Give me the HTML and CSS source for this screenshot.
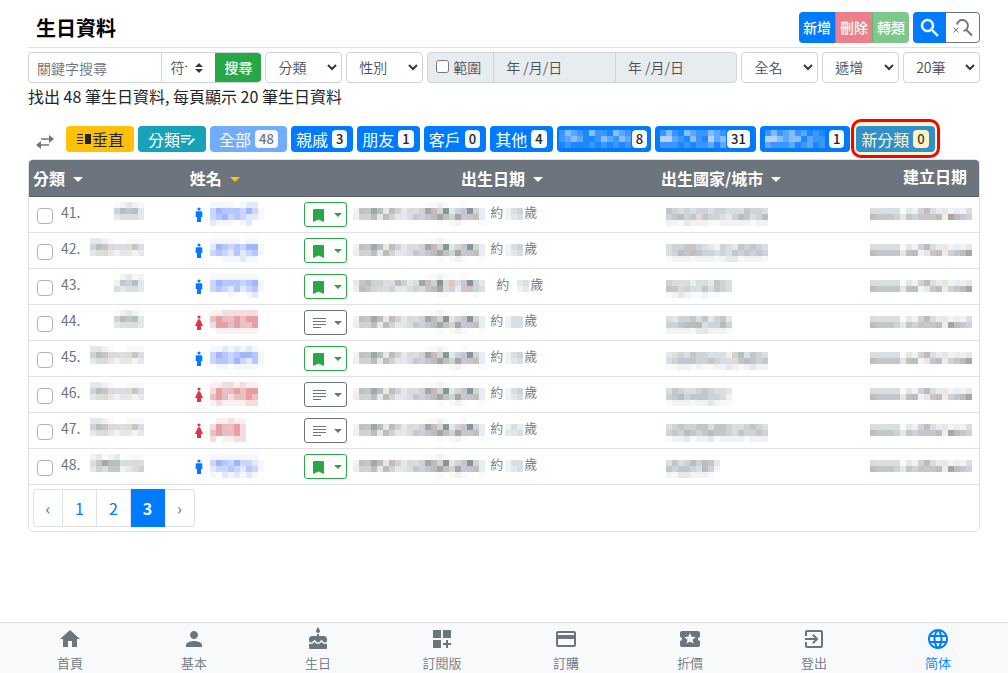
FILE: index.html
```html
<!DOCTYPE html>
<html lang="zh-Hant">
<head>
<meta charset="utf-8">
<meta name="viewport" content="width=device-width, initial-scale=1">
<title>生日資料</title>
<link rel="stylesheet" href="styles.css">
</head>
<body>
<main class="page">
  <header class="topbar">
    <h1 class="title">生日資料</h1>
    <div class="group">
      <button class="btn btn-blue">新增</button>
      <button class="btn btn-red">刪除</button>
      <button class="btn btn-green">轉類</button>
    </div>
    <div class="group tools">
      <button class="btn btn-blue btn-icon" aria-label="搜尋"><svg class="ic24" viewBox="0 0 24 24"><path stroke="currentColor" stroke-width=".4" d="M15.5 14h-.79l-.28-.27C15.41 12.59 16 11.11 16 9.5 16 5.91 13.09 3 9.5 3S3 5.91 3 9.5 5.91 16 9.5 16c1.61 0 3.09-.59 4.23-1.57l.27.28v.79l5 4.99L20.49 19l-4.99-5zm-6 0C7.01 14 5 11.99 5 9.5S7.01 5 9.5 5 14 7.01 14 9.5 11.99 14 9.5 14z"/></svg></button>
      <button class="btn btn-line btn-icon" aria-label="清除搜尋"><svg class="ic24" viewBox="0 0 24 24"><path fill="none" stroke="currentColor" stroke-width="2" d="M6 8.500a5.500 5.500 0 1 1 6.500 6.400M14.500 13l6.500 6.500"/><path fill="none" stroke="currentColor" d="M2.500 11.500l5 5M7.500 11.500l-5 5"/></svg></button>
    </div>
  </header>

  <form class="filters">
    <div class="field search">
      <input class="keyword" type="text" placeholder="關鍵字搜尋" aria-label="關鍵字搜尋">
      <span class="match"><select aria-label="符合方式"><option>符合</option></select><svg viewBox="0 0 8 10"><path d="M0 4l4-4 4 4zM0 6l4 4 4-4z"/></svg></span>
      <button class="btn submit" type="button">搜尋</button>
    </div>
    <div class="field pick"><select aria-label="分類"><option>分類</option></select><svg viewBox="0 0 10 7"><path d="M1 1l4 4 4-4"/></svg></div>
    <div class="field pick"><select aria-label="性別"><option>性別</option></select><svg viewBox="0 0 10 7"><path d="M1 1l4 4 4-4"/></svg></div>
    <div class="field range">
      <label class="range-label"><input type="checkbox">範圍</label>
      <input class="date" type="text" value="年 /月/日" disabled aria-label="開始日期">
      <input class="date" type="text" value="年 /月/日" disabled aria-label="結束日期">
    </div>
    <div class="field pick"><select aria-label="顯示名稱"><option>全名</option></select><svg viewBox="0 0 10 7"><path d="M1 1l4 4 4-4"/></svg></div>
    <div class="field pick"><select aria-label="排序"><option>遞增</option></select><svg viewBox="0 0 10 7"><path d="M1 1l4 4 4-4"/></svg></div>
    <div class="field pick"><select aria-label="每頁筆數"><option>20筆</option></select><svg viewBox="0 0 10 7"><path d="M1 1l4 4 4-4"/></svg></div>
  </form>
  <p class="summary">找出 48 筆生日資料, 每頁顯示 20 筆生日資料</p>

  <div class="tags">
    <svg class="swap" viewBox="0 0 18 14"><path fill="none" stroke="currentColor" stroke-width="1.500" d="M5 4h11M2 10h11"/><path d="M13 0l5 4-5 4zM5 6l-5 4 5 4z"/></svg>
    <button class="tag tag-wide tag-yellow"><svg class="ic16" viewBox="0 0 16 16"><path d="M1 3h6v1H1zM1 6h6v1H1zM1 9h6v1H1zM1 12h6v1H1zM9 3h6v10H9z"/></svg>垂直</button>
    <button class="tag tag-wide tag-teal">分類<svg class="ic16" viewBox="0 0 16 16"><path d="M1 4h10v1.500H1zM1 7h9v1.500H1zM1 10h5v1.500H1zM8 12.500l5.500-5.500 1.500 1.500-5.500 5.500H8z"/></svg></button>
    <button class="tag tag-all">全部<span class="badge">48</span></button>
    <button class="tag">親戚<span class="badge">3</span></button>
    <button class="tag">朋友<span class="badge">1</span></button>
    <button class="tag">客戶<span class="badge">0</span></button>
    <button class="tag">其他<span class="badge">4</span></button>
    <button class="tag tag-tight" aria-label="分類 8"><span data-mosaic="BDCBADBBADCB/BCDCAABDCBDC/ABAAABABABAB"></span><span class="badge">8</span></button>
    <button class="tag tag-masked" aria-label="分類 31"><span data-mosaic="BDBADCBBDCB/EECBADBAECD/BBBABABBCAC"></span><span class="badge">31</span></button>
    <button class="tag" aria-label="分類 1"><span data-mosaic="BDBCDBCABA/EEDCDDACBB/CBBBCABCAB"></span><span class="badge">1</span></button>
    <button class="tag tag-new">新分類<span class="badge">0</span></button>
  </div>

  <section class="card">
    <table class="list">
      <colgroup><col class="c-cat"><col class="c-name"><col class="c-mark"><col class="c-birth"><col class="c-city"><col class="c-made"></colgroup>
      <thead>
        <tr><th>分類<i class="caret"></i></th><th>姓名<i class="caret active"></i></th><th></th><th class="center">出生日期<i class="caret"></i></th><th>出生國家/城市<i class="caret"></i></th><th class="made">建立日期</th></tr>
      </thead>
      <tbody id="rows"></tbody>
    </table>
    <nav class="pager" aria-label="分頁">
      <a href="#" aria-label="上一頁" class="prev">‹</a><a href="#">1</a><a href="#">2</a><a href="#" class="current">3</a><a href="#" aria-label="下一頁" class="next">›</a>
    </nav>
  </section>
</main>

<nav class="bottom">
  <a href="#"><svg class="ic24" viewBox="0 0 24 24"><path d="M10 20v-6h4v6h5v-8h3L12 3 2 12h3v8z"/></svg>首頁</a>
  <a href="#"><svg class="ic24" viewBox="0 0 24 24"><path d="M12 12c2.210 0 4-1.790 4-4s-1.790-4-4-4-4 1.790-4 4 1.790 4 4 4zm0 2c-2.670 0-8 1.340-8 4v2h16v-2c0-2.660-5.330-4-8-4z"/></svg>基本</a>
  <a href="#"><svg class="ic24" viewBox="0 0 24 24"><path d="M12 6c1.110 0 2-.9 2-2 0-.38-.1-.73-.29-1.030L12 0l-1.710 2.970c-.19.3-.29.65-.29 1.030 0 1.100.9 2 2 2zm4.600 9.990l-1.070-1.070-1.080 1.070c-1.300 1.300-3.580 1.310-4.890 0l-1.070-1.070-1.090 1.070C6.750 16.640 5.880 17 4.960 17c-.73 0-1.400-.23-1.960-.61V21c0 .55.45 1 1 1h16c.55 0 1-.45 1-1v-4.610c-.56.38-1.230.61-1.960.61-.92 0-1.790-.36-2.440-1.010zM18 9h-5V7h-2v2H6c-1.660 0-3 1.340-3 3v1.540c0 1.080.88 1.960 1.960 1.960.52 0 1.020-.2 1.380-.57l2.140-2.130 2.130 2.130c.74.74 2.030.74 2.770 0l2.140-2.130 2.130 2.130c.37.37.86.57 1.380.57 1.080 0 1.960-.88 1.960-1.960V12C21 10.340 19.660 9 18 9z"/></svg>生日</a>
  <a href="#"><svg class="ic24" viewBox="0 0 24 24"><path d="M3 3h8v8H3zM13 3h8v8h-8zM3 13h8v8H3zM18 13h-2v3h-3v2h3v3h2v-3h3v-2h-3z"/></svg>訂閱版</a>
  <a href="#"><svg class="ic24" viewBox="0 0 24 24"><path d="M20 4H4c-1.110 0-1.990.89-1.990 2L2 18c0 1.110.89 2 2 2h16c1.110 0 2-.89 2-2V6c0-1.110-.89-2-2-2zm0 14H4v-6h16v6zm0-10H4V6h16v2z"/></svg>訂購</a>
  <a href="#"><svg class="ic24" viewBox="0 0 24 24"><path d="M20 12c0-1.100.9-2 2-2V6c0-1.100-.9-2-2-2H4c-1.100 0-1.990.9-1.990 2v4c1.100 0 1.990.9 1.990 2s-.89 2-2 2v4c0 1.100.9 2 2 2h16c1.100 0 2-.9 2-2v-4c-1.100 0-2-.9-2-2zm-4.420 4.800L12 14.500l-3.580 2.300 1.080-4.120-3.290-2.690 4.240-.25L12 5.800l1.540 3.950 4.240.25-3.290 2.690 1.090 4.110z"/></svg>折價</a>
  <a href="#"><svg class="ic24" viewBox="0 0 24 24"><path d="M10.090 15.590L11.500 17l5-5-5-5-1.410 1.410L12.670 11H3v2h9.670l-2.580 2.590zM19 3H5c-1.110 0-2 .9-2 2v4h2V5h14v14H5v-4H3v4c0 1.100.89 2 2 2h14c1.100 0 2-.9 2-2V5c0-1.100-.9-2-2-2z"/></svg>登出</a>
  <a href="#" class="lang"><svg class="ic24" viewBox="0 0 24 24"><path d="M11.990 2C6.470 2 2 6.480 2 12s4.470 10 9.990 10C17.520 22 22 17.520 22 12S17.520 2 11.990 2zm6.930 6h-2.950c-.32-1.250-.78-2.450-1.380-3.560 1.840.63 3.370 1.910 4.330 3.560zM12 4.040c.83 1.200 1.480 2.530 1.910 3.960h-3.820c.43-1.430 1.080-2.760 1.910-3.960zM4.260 14C4.100 13.360 4 12.690 4 12s.1-1.360.26-2h3.380c-.08.66-.14 1.320-.14 2s.06 1.340.14 2H4.260zm.82 2h2.950c.32 1.250.78 2.450 1.380 3.560-1.840-.63-3.370-1.900-4.330-3.560zm2.950-8H5.080c.96-1.660 2.490-2.930 4.330-3.560C8.810 5.550 8.350 6.750 8.030 8zM12 19.960c-.83-1.200-1.480-2.530-1.910-3.960h3.820c-.43 1.430-1.080 2.760-1.910 3.960zM14.340 14H9.660c-.09-.66-.16-1.320-.16-2s.07-1.350.16-2h4.680c.09.65.16 1.320.16 2s-.07 1.340-.16 2zm.25 5.560c.6-1.110 1.060-2.310 1.380-3.560h2.950c-.96 1.650-2.490 2.930-4.330 3.560zM16.360 14c.08-.66.14-1.320.14-2s-.06-1.340-.14-2h3.380c.16.64.26 1.310.26 2s-.1 1.360-.26 2h-3.380z"/></svg>简体</a>
</nav>
<script src="rows.js"></script>
</body>
</html>
```

FILE: styles.css
```css
* { box-sizing: border-box; }
body {
  margin: 0;
  min-height: 100vh;
  display: flex;
  flex-direction: column;
  background: #fff;
  color: #212529;
  font: 16px/24px "Noto Sans CJK TC", "Noto Sans", sans-serif;
}
button, input, select { font: inherit; color: inherit; margin: 0; }
a { text-decoration: none; }
svg { display: block; flex: none; fill: currentColor; }
.ic24 { width: 24px; height: 24px; }
.ic16 { width: 16px; height: 16px; }

.page { padding: 9px 28px 16px; }

.topbar {
  display: flex;
  align-items: center;
  gap: 4px;
  height: 39px;
  padding: 0 0 1px 8px;
  border-bottom: 1px solid #dee2e6;
}
.title { margin: 0 auto 0 0; font-size: 20px; line-height: 30px; font-weight: 700; color: #000; }
.group { display: flex; border-radius: 4px; overflow: hidden; }
.btn {
  display: flex;
  align-items: center;
  justify-content: center;
  height: 31px;
  border: 0;
  padding: 0 4px 1px;
  font-size: 14px;
  line-height: 20px;
  font-weight: 500;
  color: #fff;
}
.btn-blue { background: #007bff; }
.btn-red { background: #eb7f8a; border-left: 1px solid #e4606d; }
.btn-green { background: #7dc88c; border-left: 1px solid #5fb571; }
.btn-icon { width: 33px; padding: 0; }
.btn-line { width: 34px; background: #fff; color: #6c757d; border: 1px solid #6c757d; border-left: 0; border-radius: 0 4px 4px 0; }

.filters { display: flex; gap: 4px; margin-top: 4px; }
.field {
  display: flex;
  position: relative;
  height: 31px;
  border: 1px solid #ced4da;
  border-radius: 4px;
  overflow: hidden;
  font-size: 14px;
  font-weight: 350;
  color: #495057;
  background: #fff;
}
.field select { appearance: none; width: 100%; border: 0; background: none; padding: 0 0 2px 12px; }
.field svg { position: absolute; pointer-events: none; color: #343a40; }
.search { flex: 236 1 0; border-right: 0; }
.keyword { flex: 1; min-width: 0; border: 0; padding: 0 8px; }
.keyword::placeholder { color: #6c757d; }
.match { display: flex; position: relative; width: 54px; border-left: 1px solid #ced4da; }
.match select { padding: 0 28px 2px 8px; overflow: hidden; text-overflow: clip; }
.match svg { width: 8px; height: 10px; right: 12px; top: 10px; }
.submit { width: 46px; margin: -1px 0; background: #28a745; }
.pick { flex: 76 1 0; }
.pick svg { width: 10px; height: 7px; right: 4px; top: 11px; fill: none; stroke: currentColor; stroke-width: 2; }
.range { flex: 313 1 0; background: #e9ecef; }
.range-label { display: flex; align-items: center; gap: 4px; width: 65px; padding: 0 0 2px 8px; }
.range-label input { width: 13px; height: 13px; }
.date { flex: 1; min-width: 0; border: 0; border-left: 1px solid #ced4da; background: none; padding: 0 12px 2px; color: #495057; }

.summary { margin: 1px 0 0; }

.tags { display: flex; align-items: center; gap: 4px; margin-top: 18px; padding-left: 8px; isolation: isolate; }
.swap { width: 18px; height: 14px; margin: 6px 8px 0 0; color: #6c757d; }
.tag {
  display: flex;
  align-items: center;
  gap: 4px;
  height: 26px;
  padding: 0 6px 0 5px;
  border: 0;
  border-radius: 4px;
  background: #007bff;
  color: #fff;
  white-space: nowrap;
}
.tag-wide { gap: 0; padding: 0 10px; }
.tag-yellow { background: #ffc107; color: #212529; }
.tag-teal { background: #17a2b8; }
.tag-all { padding: 0 9px; background: #72acff; }
.tag-all .badge { color: #6c757d; }
.tag-tight { gap: 1px; padding: 0 4px 0 2px; }
.tag-masked { gap: 1px; }
.badge {
  height: 18px;
  padding: 0 4px;
  border-radius: 4px;
  background: #f8f9fa;
  color: #212529;
  font-size: 13px;
  line-height: 18px;
  font-weight: 500;
}
.tag-new { position: relative; margin-left: 2px; background: #318fcb; color: #fbf9cf; }
.tag-new::before {
  content: "";
  position: absolute;
  inset: -7px -5px -6px;
  z-index: -1;
  border: 3px solid #f00;
  border-radius: 10px;
  background: #fcf6cc;
}
.tag-new .badge { background: #fbf5c4; color: #3c3a25; }

.card { margin-top: 7px; border: 1px solid #dee2e6; border-radius: 5px; overflow: hidden; }
.list { width: 100%; table-layout: fixed; border-collapse: collapse; }
.c-cat { width: 16.4%; }
.c-name { width: 12%; }
.c-mark { width: 5.2%; }
.c-birth { width: 32.4%; }
.c-city { width: 21.5%; }
.list th {
  height: 36px;
  padding: 0 5px;
  background: #6c757d;
  color: #fff;
  text-align: left;
  font-weight: 700;
  border-bottom: 1px solid #5c656d;
}
.list th:first-child, .list td:first-child { padding-left: 4px; }
.list .center { text-align: center; }
.list .made { text-align: right; padding-right: 12px; padding-bottom: 4px; }
.caret { display: inline-block; margin-left: 8px; vertical-align: 3px; border: 5px solid transparent; border-top-color: currentColor; border-bottom: 0; }
.active { color: #ffc107; }
.list td { height: 36px; padding: 5px 5px 0; vertical-align: top; border-bottom: 1px solid #dee2e6; font-size: 13px; line-height: 24px; color: #6c757d; font-weight: 350; }
.line { display: flex; height: 24px; align-items: flex-start; }
.line input { appearance: none; width: 16px; height: 16px; margin: 6px 8px 0 4px; border: 1px solid #adb5bd; border-radius: 4px; background: #fff; }
.num { width: 29px; font-size: 14px; line-height: 20px; font-weight: 400; }
.cat { display: flex; justify-content: flex-end; width: 54px; }
.person { width: 8px; height: 16px; margin: 5px 7px 0 5px; }
.male { color: #007bff; }
.female { color: #dc3545; }
.mark { display: flex; align-items: center; gap: 8px; width: 43px; height: 25px; padding: 0 4px 0 7px; border: 1px solid #6c757d; border-radius: 3px; background: #fff; color: #6c757d; }
.mark .ic16 { width: 14px; margin-top: 2px; }
.mark .caret { margin: 1px 0 0; border-width: 4px; border-bottom: 0; }
.saved { color: #28a745; border-color: #28a745; }
.birth { gap: 5px; }
.age { display: flex; gap: 1px; margin-left: -3px; }
.birth span { line-height: 20px; }
.city { padding-left: 5px; }
.created { justify-content: flex-end; padding-right: 2px; }

.pager { display: flex; margin: 4px; }
.pager a { min-width: 34px; height: 38px; border: 1px solid #dee2e6; border-left: 0; color: #007bff; text-align: center; line-height: 36px; }
.pager .prev { min-width: 30px; border-left: 1px solid #dee2e6; border-radius: 4px 0 0 4px; }
.pager .next { min-width: 30px; border-radius: 0 4px 4px 0; color: #6c757d; }
.pager .current { background: #007bff; border-color: #007bff; color: #fff; font-weight: 700; }

.bottom { display: flex; margin-top: auto; height: 51px; padding: 4px 8px 0; background: #f8f9fa; border-top: 1px solid #dee2e6; }
.bottom a { flex: 1; display: flex; flex-direction: column; align-items: center; color: #6c757d; font-size: 13px; line-height: 24px; font-weight: 350; }
.bottom .lang { color: #007bff; }
```

FILE: rows.js
```js
const CELL = 6;
const COLORS = {
  1: '#f8fafa', 2: '#f0f2f3', 3: '#e5e8ea', 4: '#d9dee0', 5: '#cfd3d6', 6: '#c4c7c9', 7: '#b8bdc0', 8: '#a4a7a6', 9: '#859897',
  a: '#f5f7ff', b: '#e2e9ff', c: '#cad6ff', d: '#b6c6ff', e: '#a0b6ff',
  r: '#fbf0f0', s: '#f5dddd', t: '#edbfc0', u: '#e69fa2', v: '#e3bccb',
  w: '#c4bab7', x: '#e0dad5', y: '#f2ede6', z: '#cbc4d5', k: '#e6edf5', p: '#bdc9d4', g: '#c0c1b8',
  A: '#1a88ff', B: '#3b96ff', C: '#5aa8ff', D: '#85beff', E: '#b5d1ff'
};

function mosaic(map) {
  const lines = map.split('/');
  const width = Math.max(...lines.map(l => l.length)) * CELL;
  const height = lines.length * CELL;
  const cells = lines.flatMap((line, y) => [...line].map((c, x) =>
    COLORS[c] ? `<rect x="${x * CELL}" y="${y * CELL}" width="6" height="6" fill="${COLORS[c]}"/>` : ''));
  return `<svg width="${width}" height="${height}" shape-rendering="crispEdges" aria-hidden="true">${cells.join('')}</svg>`;
}

const SHORT = '12321/57673/34443';
const LONG = '332100111/576x44x64/34x323323';
const AGE = '245/234';
const MADE_A = 'x44441325w4k32k23/w66663g7236wy5678';
const MADE_B = 'x44441325w4k32k24/w66653656z6wy8wz5';

const rows = [
  { n: 41, cat: SHORT, male: true, name: 'aaaa0abb0/cedddceca/cdecdcbba/baaa0ab00', city: '65454554554446554/56756x65543576457/22132221122222122', made: MADE_B, age: AGE },
  { n: 42, cat: LONG, male: true, name: 'aaaaa0aa0/bedcdceea/cdcbdbcda/00aaabaa0', city: '45566543254365654/4576w6554546565p5/12221222123312221', made: MADE_A, age: AGE },
  { n: 43, cat: '02312/26573/43443', male: true, name: 'aaaaaaaa0/cedddcdea/cdcbdbcda/000a00ab0', city: '5x4xk443654/66x54464654/12321121100', made: MADE_A, age: '034/023' },
  { n: 44, cat: SHORT, male: false, name: 'rrssssss0/tuvtutuu0/suuvuttu0/0rrrrrrr0', city: '4355p463563/5567w745575/22221332221', made: MADE_B, age: '244/244' },
  { n: 45, cat: LONG, male: true, name: 'aabababa0/cedcdeeda/cddcecbda/0aa0aaaa0', city: '3454655444y574654/456p6556544x67656/11221211223212322', made: MADE_A, age: AGE },
  { n: 46, cat: LONG, male: false, name: 'rrssrsrr0/sutvutuu0/tuvsttut0/rsrrrrss0', city: '46544565443/56756665542/12221223211', made: MADE_A, age: AGE },
  { n: 47, cat: LONG, male: false, name: '0rrsrr000/suttus000/tuvtus000/s0rrss000', city: '45655664665445654/56576567665465565/12231223122221222', made: MADE_B, age: '24k/334' },
  { n: 48, cat: '231230111/4687744x4/354662345', male: true, name: 'aaaaaaaa0/cedceccba/bccdcbdca/a0bababa0', city: '464575763/656654752/213322210', made: MADE_B, age: '244/234' }
];

const DATE = '0000000000001121001000/2g6873w53x458w5935695k/y5573w5334z5678g58z6gk/0000000000000010121001';
const DATE_LONG = '00000000000011210010000/3675544w5348w59xt4z9530/y765x453345x67845kv6540/00000000000000110000100';

const BOOKMARK = '<svg class="ic16" viewBox="0 0 14 16"><path d="M1 15V3q0-1 1-1h9q1 0 1 1v12l-5.500-2.500z"/></svg>';
const NOTES = '<svg class="ic16" viewBox="0 0 14 16" shape-rendering="crispEdges"><path d="M1 3h13v1H1zM1 6h13v1H1zM1 9h13v1H1zM1 12h8v1H1z"/></svg>';
const MALE = '<svg class="person male" viewBox="0 0 8 16"><circle cx="4" cy="2" r="1.600"/><path d="M1.500 4.300h5q.8 0 .8.800v5H6V15H2v-4.900H.7v-5q0-.8.8-.8z"/></svg>';
const FEMALE = '<svg class="person female" viewBox="0 0 8 16"><circle cx="4" cy="2" r="1.600"/><path d="M3 4.200h2L8 11H6v4H2v-4H0z"/></svg>';

document.querySelectorAll('[data-mosaic]').forEach(el => { el.innerHTML = mosaic(el.dataset.mosaic); });

document.getElementById('rows').innerHTML = rows.map(r => `<tr>
    <td><div class="line"><input type="checkbox" aria-label="選取 ${r.n}"><span class="num">${r.n}.</span><span class="cat">${mosaic(r.cat)}</span></div></td>
    <td><div class="line">${r.male ? MALE : FEMALE}${mosaic(r.name)}</div></td>
    <td><button class="mark ${r.male ? 'saved' : ''}" aria-label="標記 ${r.n}">${r.male ? BOOKMARK : NOTES}<i class="caret"></i></button></td>
    <td><div class="line birth">${mosaic(r.n === 43 ? DATE_LONG : DATE)}<span>約</span><span class="age">${mosaic('000/' + r.age)}<span>歲</span></span></div></td>
    <td><div class="line city">${mosaic('0/' + r.city)}</div></td>
    <td><div class="line created">${mosaic('0/' + r.made)}</div></td>
  </tr>`).join('');
```
